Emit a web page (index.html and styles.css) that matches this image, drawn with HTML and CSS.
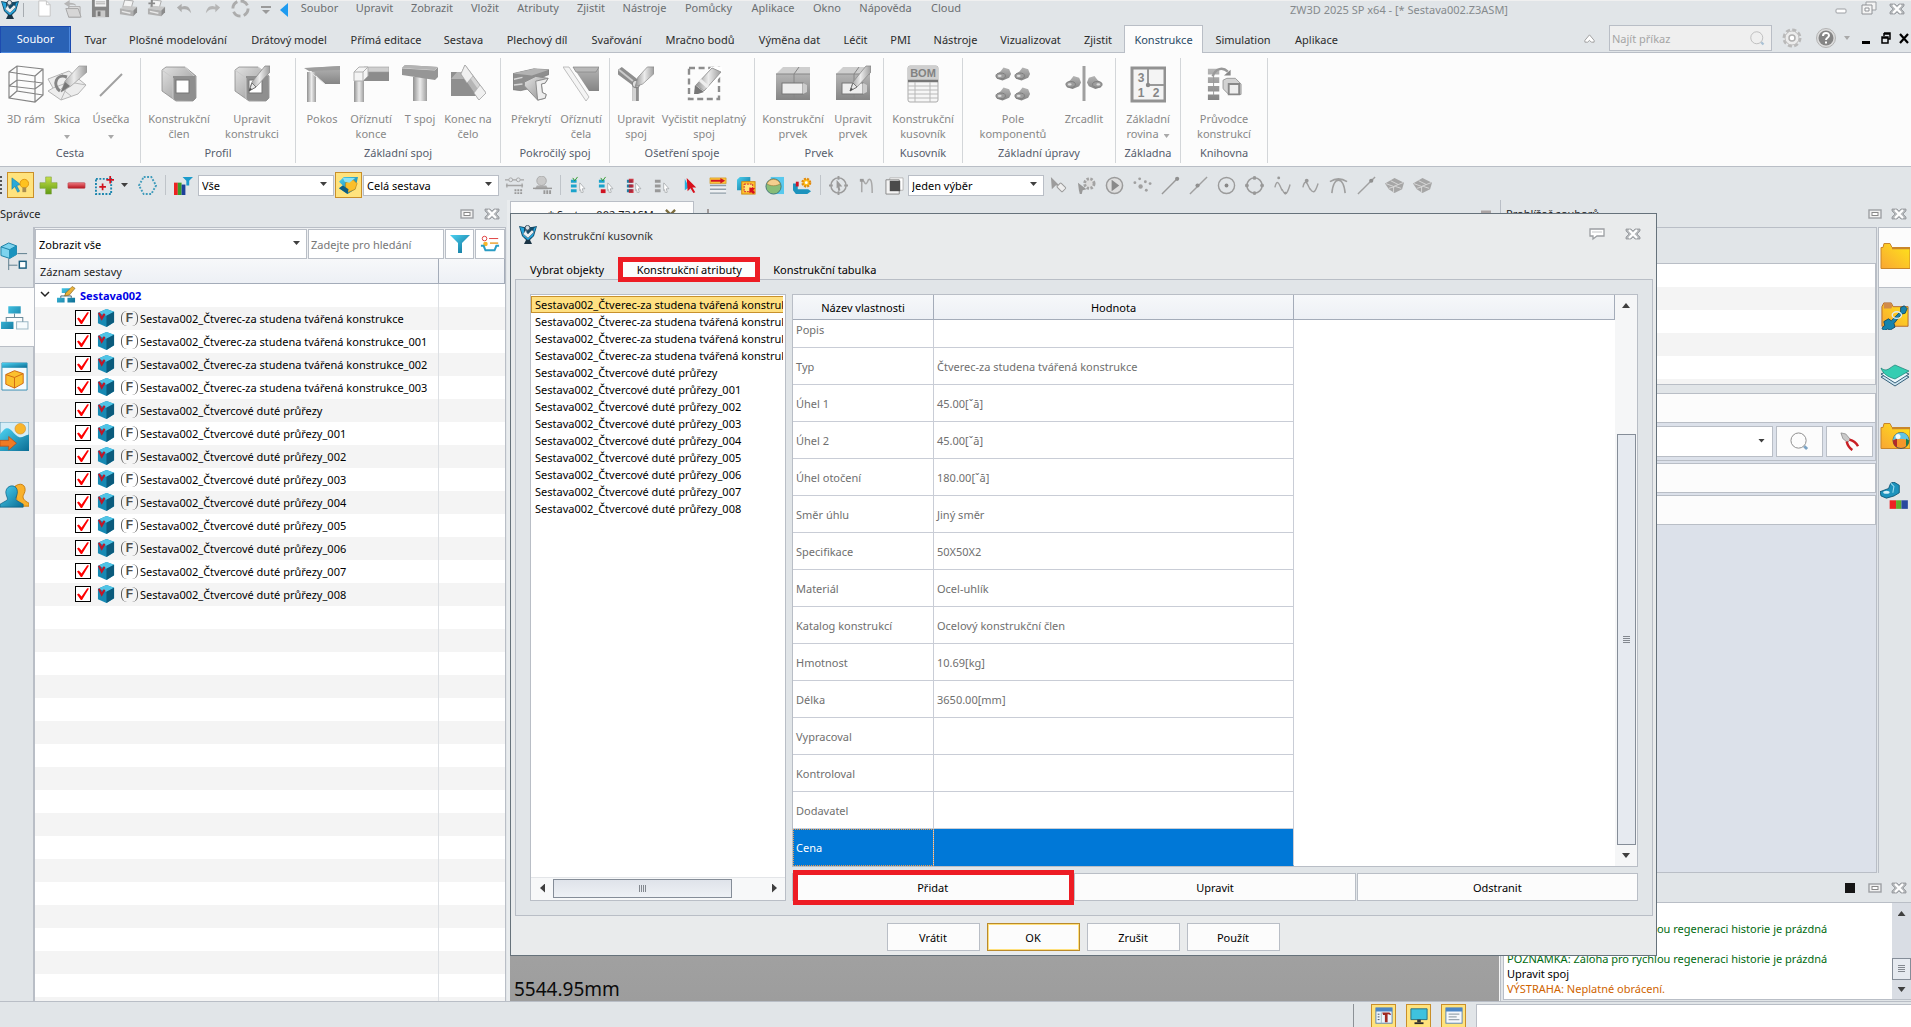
FILE: index.html
```html
<!DOCTYPE html>
<html lang="cs">
<head>
<meta charset="utf-8">
<title>ZW3D 2025 SP x64 - [* Sestava002.Z3ASM]</title>
<link rel="stylesheet" href="styles.css">
</head>
<body>
<svg class="sprite" aria-hidden="true">
  <defs>
    <linearGradient id="g1" x1="0" y1="0" x2="1" y2="1"><stop offset="0" stop-color="#e2e2e2"/><stop offset="1" stop-color="#8e8e8e"/></linearGradient>
    <linearGradient id="g2" x1="0" y1="0" x2="0" y2="1"><stop offset="0" stop-color="#b5b5b5"/><stop offset="1" stop-color="#858585"/></linearGradient>
    <linearGradient id="g3" x1="0" y1="0" x2="1" y2="0"><stop offset="0" stop-color="#909090"/><stop offset=".5" stop-color="#ececec"/><stop offset="1" stop-color="#9c9c9c"/></linearGradient>
    <linearGradient id="blu" x1="0" y1="0" x2="1" y2="1"><stop offset="0" stop-color="#4cd2f2"/><stop offset="1" stop-color="#0b6d94"/></linearGradient>
    <linearGradient id="yel" x1="0" y1="1" x2="1" y2="0"><stop offset="0" stop-color="#f9a634"/><stop offset="1" stop-color="#ffe619"/></linearGradient>
    <linearGradient id="grn" x1="0" y1="0" x2="0" y2="1"><stop offset="0" stop-color="#c7e04a"/><stop offset="1" stop-color="#5e9a12"/></linearGradient>
    <linearGradient id="red" x1="0" y1="0" x2="0" y2="1"><stop offset="0" stop-color="#f07a80"/><stop offset="1" stop-color="#b5121c"/></linearGradient>
  </defs>
  <symbol id="logo" viewBox="0 0 18 20"><path d="M0 1l5 1h8l5-1-3 10-4 4H7l-4-4z" fill="#134a68"/><path d="M1 2l4 1v5l4 3 5-4 1-4 2-1-3 9-5 4-5-4z" fill="#26a5dc"/><circle cx="8.500" cy="2.800" r="2.400" fill="#d9dfe3" stroke="#456"/><path d="M7 5l-3 4 5 4 6-6-2-2-4 4-1-1z" fill="#e7eef1" stroke="#567" stroke-width=".6"/><path d="M7 15h4l2 4H5z" fill="#1b3445"/></symbol>
  <symbol id="q-new" viewBox="0 0 20 20"><path d="M4 1h8l4 4v12H4z" fill="#fff" stroke="#c4c4c4"/><path d="M12 1v4h4" fill="none" stroke="#c4c4c4"/></symbol>
  <symbol id="q-open" viewBox="0 0 20 20"><path d="M6 7h12v11H6z" fill="#e2e2e2" stroke="#aaa"/><path d="M3 9h13l3 9H6z" fill="#d6d6d6" stroke="#a6a6a6"/><path d="M1 4l6-4v3c4 0 6 1 7 3-2-1-4-1-7-1v3z" fill="#b5b5b5"/></symbol>
  <symbol id="q-save" viewBox="0 0 20 20"><path d="M1 0h18v18H1z" fill="#858585"/><path d="M4 0h12v7H4z" fill="#f3f3f3"/><path d="M5 2h10M5 4h10" stroke="#aaa"/><path d="M5 11h10v7H5z" fill="#c9c9c9"/><path d="M7 12h3v5H7z" fill="#777"/></symbol>
  <symbol id="q-print" viewBox="0 0 20 20"><path d="M6 0l9 1-2 7-9-1z" fill="#f4f4f4" stroke="#aaa"/><path d="M1 9l5-3 13 1-4 4z" fill="#c8c8c8"/><path d="M1 9l14 2v6L1 15z" fill="#b0b0b0"/><path d="M15 11l4-4v6l-4 4z" fill="#8c8c8c"/><path d="M3 12l9 2" stroke="#e8e8e8" stroke-width="1.5"/></symbol>
  <symbol id="q-plus" viewBox="0 0 20 20"><path d="M5 0v7M1.500 3.500h7" stroke="#8a8a8a" stroke-width="2"/></symbol>
  <symbol id="q-undo" viewBox="0 0 20 20"><path d="M2 8l5-4v3c6-2 9 1 10 7-3-4-5-5-10-4v3z" fill="#adadad"/></symbol>
  <symbol id="q-redo" viewBox="0 0 20 20"><path d="M18 8l-5-4v3C7 5 4 8 3 14c3-4 5-5 10-4v3z" fill="#b5b5b5"/></symbol>
  <symbol id="q-sync" viewBox="0 0 20 20"><circle cx="10" cy="9" r="8" fill="none" stroke="#acacac" stroke-width="3" stroke-dasharray="9 3.5"/></symbol>
  <symbol id="q-more" viewBox="0 0 10 10"><path d="M0 1h10v2H0zM1 5h8L5 9z" fill="#9a9a9a"/></symbol>
  <symbol id="q-tri" viewBox="0 0 8 14"><path d="M8 0v14L0 7z" fill="#1e9bf0"/></symbol>

  <symbol id="w-min" viewBox="0 0 16 16"><rect x="3" y="8" width="10" height="4" rx="1" fill="#fff" stroke="#9c9fa3"/></symbol>
  <symbol id="w-rest" viewBox="0 0 16 16"><path d="M5 1h10v8H5z" fill="#f4f4f4" stroke="#9c9fa3"/><path d="M1 4h10v9H1z" fill="#f4f4f4" stroke="#8f9296"/><path d="M4 7h4v3H4z" fill="#fff" stroke="#8f9296"/></symbol>
  <symbol id="w-close" viewBox="0 0 16 16"><path d="M1 3h5l2 2 2-2h5v2l-3 3 3 3v2h-5l-2-2-2 2H1v-2l3-3-3-3z" fill="#b4b7ba" stroke="#92969a" stroke-width=".8"/><path d="M4 4l8 8M12 4l-8 8" stroke="#fff" stroke-width="2.2"/></symbol>
  <symbol id="w-dock" viewBox="0 0 16 16"><rect x="2" y="4" width="12" height="8" fill="#f0f0f0" stroke="#9da0a4" stroke-width="1.4"/><rect x="5" y="6.500" width="6" height="3" fill="#fff" stroke="#888"/></symbol>
  <symbol id="w-note" viewBox="0 0 16 16"><path d="M1 3h14v7H8l-4 3v-3H1z" fill="#fff" stroke="#9c9fa3" stroke-width="1.3"/><path d="M3 6h10" stroke="#c5c7c9"/></symbol>
  <symbol id="search" viewBox="0 0 20 20"><circle cx="9" cy="9" r="8" fill="none" stroke="#8a8a8a"/><path d="M15 15l3 3" stroke="#7ba3c4" stroke-width="3"/></symbol>
  <symbol id="gear" viewBox="0 0 20 20"><circle cx="10" cy="10" r="8" fill="#eee" stroke="#b9b9b9" stroke-width="3" stroke-dasharray="4 2.280"/><circle cx="10" cy="10" r="7" fill="#ececec" stroke="#bdbdbd"/><circle cx="10" cy="10" r="3" fill="#fff" stroke="#b0b0b0" stroke-width="1.500"/></symbol>
  <symbol id="help" viewBox="0 0 20 20"><circle cx="10" cy="10" r="9.500" fill="#dcdcdc" stroke="#b3b3b3"/><circle cx="10" cy="10" r="7.500" fill="#858585"/><path d="M7 8c0-4 6-4 6-.5 0 2.300-3 2.300-3 4.500m0 1.500v2" fill="none" stroke="#fff" stroke-width="2"/></symbol>

  <symbol id="r-frame" viewBox="0 0 36 38"><path d="M1 7L9 1l26 3v26l-8 7-26-4zM1 7l26 4v26M27 11l8-7M9 1v25l26 4M9 26l-8 7M1 21l26 3 8-6M1 21l8-6 26 3" fill="none" stroke="#858585" stroke-width="1.200"/></symbol>
  <symbol id="r-sketch" viewBox="0 0 40 38"><path d="M1 14l21-8 17 14-8 9-17 6L1 26l5-3z" fill="#ededed" stroke="#b5b5b5"/><path d="M6 23l16-6 17 3M14 35l8-18-8-9M24 31l-10-8" fill="none" stroke="#b9b9b9"/><path d="M20 12C9 8 5 20 13 26" fill="none" stroke="#858585" stroke-width="3"/><path d="M14 27l4-11L32 1h8v6L24 21z" fill="url(#g3)" stroke="#9a9a9a" stroke-width=".7"/><path d="M14 27l4-10 5 4z" fill="#777"/></symbol>
  <symbol id="r-line" viewBox="0 0 36 38"><path d="M7 31L29 9" stroke="#a0a0a0" stroke-width="2"/></symbol>
  <symbol id="r-box" viewBox="0 0 36 38"><path d="M1 5l4-3h19l11 9v22l-3 3H15L1 26z" fill="url(#g1)" stroke="#8a8a8a" stroke-width=".8"/><path d="M12 11h22v24H14l-2-2z" fill="#8f8f8f"/><path d="M1 5l11 8v21M24 2l9 9" fill="none" stroke="#c9c9c9"/><rect x="15" y="15" width="13" height="13" fill="#fff" stroke="#777"/></symbol>
  <symbol id="r-pen" viewBox="0 0 36 38"><path d="M15 26l3-9L31 1l5 0v6L22 22z" fill="url(#g3)" stroke="#8c8c8c" stroke-width=".8"/><path d="M15 26l3-8 4 4z" fill="#e9e9e9" stroke="#555" stroke-width=".7"/><path d="M15 26l1-3 2 1z" fill="#444"/></symbol>
  <symbol id="r-miter" viewBox="0 0 36 38"><path d="M4 3l32-2v18H21z" fill="url(#g2)"/><path d="M3 7h9v30H3z" fill="url(#g3)"/><path d="M0 3l36-2v4L5 6z" fill="#9d9d9d"/><path d="M5 6l16 13" stroke="#e5e5e5"/></symbol>
  <symbol id="r-trim" viewBox="0 0 36 38"><path d="M11 4h25v12H11z" fill="#8c8c8c"/><path d="M11 2h25v5H11z" fill="#cfcfcf" stroke="#9a9a9a" stroke-width=".6"/><path d="M1 14h10v23H1z" fill="url(#g3)"/><path d="M1 7l5-5h9v9l-5 5H1z" fill="#f4f4f4" stroke="#b0b0b0"/><path d="M1 7h9v9M10 7l5-5" fill="none" stroke="#b0b0b0"/></symbol>
  <symbol id="r-tee" viewBox="0 0 36 38"><path d="M11 12h14v24H11z" fill="url(#g3)"/><path d="M0 3l3-3 33 2v10l-3 3L0 10z" fill="#969696"/><path d="M0 3l33 2 3-3" fill="none" stroke="#d9d9d9"/><path d="M0 3l3-3 33 2-3 3z" fill="#b3b3b3"/></symbol>
  <symbol id="r-cap" viewBox="0 0 36 38"><path d="M1 7h15l14 20v4H1z" fill="#8f8f8f"/><path d="M1 14l6-7h9l4 7z" fill="#b4b4b4"/><path d="M15 0l21 28-7 7L11 9z" fill="#c4c4c4" fill-opacity=".7" stroke="#8f8f8f" stroke-width=".8"/><path d="M15 0l8 11-6 7-6-9z" fill="#f0f0f0" stroke="#a5a5a5" stroke-width=".6"/><path d="M30 20l6 8-7 7-5-7z" fill="#f0f0f0" stroke="#a5a5a5" stroke-width=".6"/></symbol>
  <symbol id="r-over" viewBox="0 0 38 38"><path d="M0 8l22-5 16 1v5l-12 5v8l-18 4-8-1z" fill="#8e8e8e" stroke="#777" stroke-width=".7"/><path d="M0 8l22-5 16 1-18 6z" fill="#b3b3b3"/><path d="M1 14l9-2M1 20l9-1" fill="none" stroke="#d8d8d8" stroke-width="1.500"/><path d="M12 17l12-6 13 2-3 5-4 1 1 9 4 2-1 4-8 2-14-15z" fill="url(#g1)" stroke="#8b8b8b"/><path d="M24 16l13-3-3 5-4 1 1 9 4 2-1 4-8 2z" fill="#ededed" stroke="#888"/></symbol>
  <symbol id="r-face" viewBox="0 0 36 38"><path d="M10 2h26v24H26z" fill="url(#g2)"/><path d="M10 2h26l-3 5H13z" fill="#b8b8b8" stroke="#858585" stroke-width=".7"/><path d="M0 2h6l20 30-3 4z" fill="#f4f4f4" stroke="#b0b0b0" stroke-width=".8"/></symbol>
  <symbol id="r-joint" viewBox="0 0 38 38"><path d="M0 4l4-3 18 14v22h-7V20L0 9z" fill="#8e8e8e"/><path d="M15 19h4v18h-4z" fill="#d2d2d2"/><path d="M1 4l15 12" stroke="#ccc" stroke-width="2"/><circle cx="19" cy="19" r="4" fill="#ddd" stroke="#777"/><path d="M18 22l3-10L31 1h7v7L26 19z" fill="url(#g3)" stroke="#8c8c8c" stroke-width=".8"/></symbol>
  <symbol id="r-clean" viewBox="0 0 36 38"><rect x="3" y="3" width="30" height="31" fill="none" stroke="#8d8d8d" stroke-width="2.400" stroke-dasharray="6 3.600"/><path d="M7 24L25 2h11v8L17 30z" fill="#fff"/><path d="M10 20L26 3l9 4-17 19z" fill="url(#g3)" stroke="#999"/><path d="M9 20l9 7-6 2-4 0z" fill="#777"/><path d="M14 15l8 7" stroke="#eee" stroke-width="3"/></symbol>
  <symbol id="r-feat" viewBox="0 0 36 38"><path d="M1 9h34v26H1z" fill="url(#g2)"/><path d="M1 9l7-7h27v7z" fill="#cfcfcf"/><path d="M1 9h34M19 9l5-7M19 9v26" stroke="#868686"/><rect x="7" y="18" width="21" height="11" fill="#eee" stroke="#777"/><path d="M28 18l4 2v7l-4 2z" fill="#ccc"/></symbol>
  <symbol id="r-bom" viewBox="0 0 36 38"><rect x="3" y="1" width="30" height="36" rx="2" fill="#f6f6f6" stroke="#ababab"/><rect x="3" y="1" width="30" height="14" rx="2" fill="#cfcfcf"/><path d="M3 16h30" stroke="#777" stroke-width="2.500"/><path d="M3 21h30M3 25h30M3 29h30M3 33h30M10 17v20M25 17v20" stroke="#b8b8b8"/></symbol>
  <symbol id="lug" viewBox="0 0 18 14"><path d="M1 8l5-4 3-4 6 2 2 5-2 4-7 3-6-2z" fill="url(#g2)"/><ellipse cx="6" cy="9" rx="5" ry="3" fill="#9d9d9d" stroke="#7c7c7c"/><ellipse cx="5" cy="9" rx="2" ry="1.200" fill="#ddd"/></symbol>
  <symbol id="r-array" viewBox="0 0 36 38"><use href="#lug" x="0" y="2" width="17" height="14"/><use href="#lug" x="19" y="2" width="17" height="14"/><use href="#lug" x="0" y="22" width="17" height="14"/><use href="#lug" x="19" y="22" width="17" height="14"/></symbol>
  <symbol id="r-mirror" viewBox="0 0 40 38"><use href="#lug" x="1" y="10" width="17" height="15"/><g transform="matrix(-1 0 0 1 40 0)"><use href="#lug" x="1" y="10" width="17" height="15"/></g><path d="M20 1v35" stroke="#a0a0a0" stroke-width="3"/></symbol>
  <symbol id="r-plane" viewBox="0 0 36 38"><rect x="2" y="3" width="33" height="33" fill="#f4f4f4" stroke="#929292" stroke-width="3"/><path d="M18 4v16h16" fill="none" stroke="#999" stroke-width="2"/><circle cx="18" cy="20" r="2.200" fill="#888"/></symbol>
  <symbol id="r-wiz" viewBox="0 0 38 38"><path d="M2 3h12v6H2zM2 12h12v6H2zM2 21h12v6H2zM2 30h12v6H2z" fill="url(#g2)"/><path d="M8 9v22" stroke="#999"/><path d="M7 11C10 2 18 1 23 6" fill="none" stroke="#999" stroke-width="2.500"/><path d="M26 4v6h-7z" fill="#888"/><path d="M18 15l4-2h9l6 6v11H24l-6-6z" fill="#d2d2d2" stroke="#999"/><path d="M24 19h11v11H24z" fill="#eee" stroke="#888" stroke-width="2"/></symbol>

  <symbol id="t-lamp" viewBox="0 0 20 20"><path d="M1 2l9 7-4 1 3 6-2 1-3-6-3 3z" fill="#2aa9d8" stroke="#0b76a6" stroke-width=".6"/><circle cx="14" cy="8" r="4.500" fill="#ffc21e" stroke="#e2960f"/><path d="M12 12h4v5h-4z" fill="#a98d4f"/></symbol>
  <symbol id="t-plus" viewBox="0 0 20 20"><path d="M7 1h6v6h6v6h-6v6H7v-6H1V7h6z" fill="url(#grn)" stroke="#7a9d3b" stroke-width=".6"/></symbol>
  <symbol id="t-minus" viewBox="0 0 20 20"><rect x="1" y="7" width="18" height="6" rx="1" fill="url(#red)" stroke="#b5444b" stroke-width=".6"/></symbol>
  <symbol id="t-pick" viewBox="0 0 20 20"><rect x="1" y="3" width="16" height="16" fill="none" stroke="#1c86ae" stroke-width="2" stroke-dasharray="2 1.600"/><path d="M8 8v7M4.500 11.500h7M16 0v8M12 4h8" stroke="#d1121e" stroke-width="1.800"/></symbol>
  <symbol id="t-hex" viewBox="0 0 20 20"><path d="M6 1h8l5 9-5 9H6l-5-9z" fill="none" stroke="#3f9bbb" stroke-width="2" stroke-dasharray="2 1.600"/></symbol>
  <symbol id="t-filter" viewBox="0 0 20 20"><path d="M0 7h4v13H0z" fill="#e22"/><path d="M4 7h4v13H4z" fill="#3a9e2a"/><path d="M8 9h4v11H8z" fill="#1c3f9a"/><path d="M9 1h11l-4 4v5h-3V5z" fill="#1b9bcb"/></symbol>
  <symbol id="t-asm" viewBox="0 0 20 20"><path d="M0 6l5-5h15l-3 13-8 5-9-6 4-3z" fill="url(#blu)"/><path d="M7 7l8-3 4 4-2 6-7 3-3-3z" fill="#fbbf2a" stroke="#b97d0a" stroke-width=".6"/><path d="M4 2h13l-6 5-5-1z" fill="#8be3f5"/><path d="M0 13l4-3 6 4-1 5z" fill="#0f5c80"/></symbol>
  <symbol id="t-ref" viewBox="0 0 20 20"><circle cx="6" cy="4" r="2" fill="none" stroke="#a5a5a5"/><circle cx="14" cy="4" r="2" fill="none" stroke="#a5a5a5"/><path d="M0 4h4M8 4h4M16 4h4M1 10h18M2 8v4M18 8v4" stroke="#a5a5a5" stroke-width="1.400"/><path d="M10 15h9M10 18h9" stroke="#999" stroke-dasharray="2 1" stroke-width="2"/></symbol>
  <symbol id="t-ref2" viewBox="0 0 20 20"><circle cx="9" cy="5" r="5" fill="#c9c9c9" stroke="#aaa"/><path d="M4 10h10l2 4H2z" fill="#ababab"/><path d="M0 13h20" stroke="#999" stroke-width="1.500"/><path d="M11 16h9M11 18h9" stroke="#999" stroke-dasharray="2 1" stroke-width="2"/></symbol>
  <symbol id="cur" viewBox="0 0 8 12"><path d="M1 0l6 7-3 0 1 4-2 1-1-4-1 1z" fill="#fff" stroke="#9a9ea2" stroke-width=".8"/></symbol>
  <symbol id="t-l1" viewBox="0 0 20 20"><path d="M2 4h6v3H2zM2 9h6v3H2zM2 14h6v3H2z" fill="#1ba3cb"/><path d="M4 2l2 3 3-4" stroke="#2f9a28" fill="none"/><use href="#cur" x="10" y="7" width="8" height="11"/></symbol>
  <symbol id="t-l2" viewBox="0 0 20 20"><path d="M2 4h6v3H2zM2 9h6v3H2z" fill="#1ba3cb"/><path d="M4 14h5v4H4z" fill="#d01422"/><path d="M4 2l2 3 3-4" stroke="#2f9a28" fill="none"/><use href="#cur" x="10" y="7" width="8" height="11"/></symbol>
  <symbol id="t-l3" viewBox="0 0 20 20"><path d="M2 4h6v3H2zM2 9h6v3H2zM2 14h6v3H2z" fill="#1b7fa5"/><path d="M4 3h5v4H4zM4 9h5v3H4zM4 14h5v4H4z" fill="#d01422" fill-opacity=".8"/><use href="#cur" x="10" y="7" width="8" height="11"/></symbol>
  <symbol id="t-l4" viewBox="0 0 20 20"><path d="M2 4h6v3H2zM2 9h6v3H2zM2 14h6v3H2z" fill="#999"/><use href="#cur" x="10" y="7" width="8" height="11"/></symbol>
  <symbol id="t-arr" viewBox="0 0 20 20"><path d="M4 3v12l4-3 3 5z" fill="#25b1df"/><path d="M6 2l10 10-4 0 3 5-2 1-3-5-3 3z" fill="#d8101c"/></symbol>
  <symbol id="t-rows" viewBox="0 0 20 20"><path d="M1 2h17v6H1z" fill="#fbc43a" stroke="#c98e1a" stroke-width=".6"/><path d="M2 5h11" stroke="#d01422" stroke-width="2"/><path d="M12 2l5 3-5 3z" fill="#d01422"/><path d="M1 9h17v10H1z" fill="#eef1f3"/><path d="M1 10h17M1 14h17M1 18h17" stroke="#8f9da8" stroke-width="1.500"/></symbol>
  <symbol id="t-sel" viewBox="0 0 20 20"><path d="M0 4l3-3h11v14H0z" fill="url(#blu)"/><rect x="5" y="6" width="14" height="13" fill="#ffc52e" stroke="#d08710"/><rect x="7.500" y="8.500" width="9" height="8" fill="#ffe67a" stroke="#c23" stroke-dasharray="2 1"/><path d="M13 12l6 1-2 2 2 2-2 2-2-2-2 1z" fill="#d8101c"/></symbol>
  <symbol id="t-globe" viewBox="0 0 20 20"><path d="M6 1h14v18H6z" fill="#58c9ee"/><circle cx="9" cy="11" r="8" fill="#87bd78" stroke="#477"/><path d="M2 8c3-6 11-6 14 0-3 3-11 3-14 0z" fill="#f3cf8e" stroke="#9b7334" stroke-width=".6"/></symbol>
  <symbol id="t-bowl" viewBox="0 0 20 20"><path d="M0 8h5v6h11l3 2-4 3H3l-3-4z" fill="#1c93bd"/><path d="M3 6h3v5H3z" fill="#d01422"/><circle cx="14" cy="7" r="4" fill="#ffc21e" stroke="#e28a0f" stroke-width="2.500" stroke-dasharray="2 1.200"/><circle cx="14" cy="7" r="1.500" fill="#fff"/></symbol>
  <symbol id="t-circ" viewBox="0 0 20 20"><circle cx="10" cy="10" r="8" fill="none" stroke="#9b9b9b" stroke-width="1.500"/><path d="M10 0v4M10 16v4M0 10h4M16 10h4" stroke="#9b9b9b" stroke-width="2"/><path d="M8 4l6 7-3 0 1 4-2 1-1-4-1 1z" fill="#999"/></symbol>
  <symbol id="t-zig" viewBox="0 0 20 20"><path d="M5 17V4c3-1 3 10 7 0 3-2 4 3 4 14" fill="none" stroke="#a9a9a9" stroke-width="1.600"/><path d="M3 3h4v3H3z" fill="#999"/></symbol>
  <symbol id="t-sq" viewBox="0 0 20 20"><path d="M5 2h14v13H5z" fill="#fff" stroke="#b5b5b5"/><path d="M1 4h14v15H1z" fill="#f4f4f4" stroke="#888"/><path d="M5 5h11v11H5z" fill="#4b4b4b"/></symbol>
  <symbol id="t-c1" viewBox="0 0 20 20"><path d="M2 1l9 9-4 0-4 4z" fill="#9c9c9c"/><rect x="9" y="9" width="8" height="6" rx="1" transform="rotate(45 13 12)" fill="#eee" stroke="#999"/></symbol>
  <symbol id="t-c2" viewBox="0 0 20 20"><circle cx="13" cy="8" r="5" fill="#ddd" stroke="#a3a3a3" stroke-width="3" stroke-dasharray="2.500 1.500"/><path d="M1 7l9 7-4 1-1 4-2 0-1-4z" fill="#999"/></symbol>
  <symbol id="t-play" viewBox="0 0 20 20"><circle cx="10" cy="10" r="8.500" fill="#dedede" stroke="#9b9b9b" stroke-width="1.600"/><path d="M7 4l8 6-8 6z" fill="#8a8a8a"/></symbol>
  <symbol id="t-pts" viewBox="0 0 20 20"><g fill="#a0a0a0"><circle cx="2" cy="7" r="1.500"/><circle cx="7" cy="3" r="1.500"/><circle cx="8" cy="11" r="2.300"/><circle cx="13" cy="6" r="1.500"/><circle cx="18" cy="8" r="1.500"/><circle cx="14" cy="15" r="1.500"/></g></symbol>
  <symbol id="t-seg" viewBox="0 0 20 20"><path d="M1 19L17 3" stroke="#999" stroke-width="1.500"/><circle cx="17" cy="3" r="2.200" fill="#909090"/></symbol>
  <symbol id="t-seg2" viewBox="0 0 20 20"><path d="M1 19L19 1" stroke="#a0a0a0" stroke-width="1.500"/><circle cx="9" cy="10" r="2.200" fill="#909090"/></symbol>
  <symbol id="t-cen" viewBox="0 0 20 20"><circle cx="10" cy="10" r="8.500" fill="none" stroke="#9b9b9b" stroke-width="1.500"/><circle cx="10" cy="10" r="2" fill="#888"/></symbol>
  <symbol id="t-quad" viewBox="0 0 20 20"><circle cx="10" cy="10" r="8" fill="none" stroke="#9b9b9b" stroke-width="1.500"/><g fill="#999"><circle cx="10" cy="2" r="2"/><circle cx="10" cy="18" r="2"/><circle cx="2" cy="10" r="2"/><circle cx="18" cy="10" r="2"/></g></symbol>
  <symbol id="t-wav" viewBox="0 0 20 20"><path d="M2 12c3-14 7 5 8 3 4 8 6 0 8-6" fill="none" stroke="#a0a0a0" stroke-width="1.500"/><circle cx="6" cy="2" r="1.500" fill="#999"/><circle cx="13" cy="18" r="1.500" fill="#999"/></symbol>
  <symbol id="t-wav2" viewBox="0 0 20 20"><path d="M2 12c3-14 7 4 8 2 4 6 6 0 8-6" fill="none" stroke="#a0a0a0" stroke-width="1.500"/><circle cx="6" cy="5" r="2" fill="#999"/></symbol>
  <symbol id="t-arch" viewBox="0 0 20 20"><path d="M1 6c6-4 12-4 18 0M3 18C5 0 15 0 17 18" fill="none" stroke="#9f9f9f" stroke-width="1.700"/></symbol>
  <symbol id="t-seg3" viewBox="0 0 20 20"><path d="M1 19L19 1" stroke="#a0a0a0" stroke-width="1.500"/><circle cx="15" cy="5" r="2.200" fill="#909090"/></symbol>
  <symbol id="t-surf" viewBox="0 0 20 20"><path d="M0 8l5-3 5-3 10 5-2 7-8 4-6-4z" fill="#a6a6a6"/><path d="M1 8l8 3 10-4M4 13l7-2 6 2M6 5l8 4M9 11v6" stroke="#d8d8d8" fill="none"/></symbol>

  <symbol id="s-tree" viewBox="0 0 30 30"><path d="M1 5l8-4 8 3v9l-7 4-9-3z" fill="#7dd3ee" stroke="#1b7fa5"/><path d="M1 5l9 3 7-4M10 8v9" stroke="#1b7fa5" fill="none"/><path d="M10 8l7-4v9l-7 4z" fill="#1a93be"/><path d="M18 12h10M9 17v12M9 24h9" stroke="#5c7c8c" fill="none"/><rect x="20" y="20" width="7" height="7" fill="#fff" stroke="#1b5f7f" stroke-width="1.500"/></symbol>
  <symbol id="s-asm" viewBox="0 0 28 28"><path d="M8 4h12v7H8zM1 19h12v7H1z" fill="url(#blu)"/><path d="M16 19h11v7H16z" fill="#f6fbfd" stroke="#9db9c6"/><path d="M14 11v4M6 19v-4h16v4" fill="none" stroke="#6d8c9b"/></symbol>
  <symbol id="s-cube" viewBox="0 0 28 30"><path d="M1 1h26v28H1z" fill="#f3fbfe" stroke="#3a8fb2"/><path d="M1 1h26v5H1z" fill="url(#blu)"/><path d="M5 13l9-4 9 3v10l-9 5-9-4z" fill="#fbc02d" stroke="#d06a12"/><path d="M5 13l9 3 9-4M14 16v11" fill="none" stroke="#d06a12"/></symbol>
  <symbol id="s-img" viewBox="0 0 30 30"><path d="M0 0h30v30H0z" fill="#d5eef8" stroke="#5d99b4"/><path d="M0 13c6-9 9-8 14-2 8 8 8 4 16 2v17H0z" fill="url(#blu)"/><circle cx="21" cy="7" r="5.500" fill="#f8b62b" stroke="#d1862a" stroke-width=".6"/><path d="M0 19h9v-4l8 7-8 7v-4H0z" fill="#f07a24" stroke="#b8470f" stroke-width=".7"/></symbol>
  <symbol id="s-user" viewBox="0 0 30 26"><path d="M16 2c8-5 12 2 9 8-3 5 0 7 5 10v3H18z" fill="#f9b12c" stroke="#c97f12"/><path d="M6 8c1-8 12-8 12 0 0 5-3 7-1 9l7 4v3H0v-3l7-4c2-2-1-4-1-9z" fill="url(#blu)" stroke="#0d5c80" stroke-width=".7"/></symbol>
  <symbol id="funnel" viewBox="0 0 20 20"><path d="M0 1h20l-8 8v10H8V9z" fill="url(#blu)"/></symbol>
  <symbol id="basket" viewBox="0 0 22 20"><circle cx="5" cy="4" r="2.500" fill="none" stroke="#d33"/><path d="M10 4h10" stroke="#d33"/><circle cx="6" cy="10" r="2.500" fill="#f8b62b"/><path d="M11 9h9" stroke="#e99b23" stroke-width="1.500"/><path d="M1 12h3l2 5h10l2-5h3" fill="none" stroke="#2a9cc4" stroke-width="2.200"/></symbol>
  <symbol id="root" viewBox="0 0 20 18"><path d="M5 2h9v5H5zM0 12h8v5H0zM11 12h8v5h-8z" fill="url(#blu)"/><path d="M9 7v3M4 12v-2h11v2" fill="none" stroke="#47606e"/><path d="M9 7L16 0l3 2-6 7-5 1z" fill="#e9b13a" stroke="#7b5a16" stroke-width=".6"/></symbol>
  <symbol id="part" viewBox="0 0 19 19"><path d="M1 4l9-4 8 3v11l-8 5-9-4z" fill="#1689b3"/><path d="M1 4l9-4 8 3-8 4z" fill="#4fc4e6"/><path d="M10 7l8-4v11l-8 5z" fill="#0b5b7c"/><path d="M2 4l3 6 3-5" fill="none" stroke="#c01828" stroke-width="2.200"/></symbol>

  <symbol id="f-dir" viewBox="0 0 30 27"><path d="M1 5h2l1-4h6l2 4h18v21H1z" fill="url(#yel)" stroke="#c9862b"/><path d="M12 6h18" stroke="#c9862b" stroke-width="1.500"/></symbol>
  <symbol id="f-bolt" viewBox="0 0 30 30"><path d="M1 5l2-4h8l2 4h16v21H1z" fill="url(#yel)" stroke="#b3662a"/><path d="M3 1h8l1 4-1 2H3z" fill="#d08a4a"/><path d="M1 28l3-3-1-4 5-3 3 2 10-10v-4l4-2 3 3-2 5-4 1-8 10 1 4-5 3-3-1-4 2z" fill="#1783ad" stroke="#0b3a55" stroke-width=".8"/><ellipse cx="17" cy="14" rx="5" ry="3.500" fill="none" stroke="#dceaf0" stroke-width="1.500"/></symbol>
  <symbol id="f-lay" viewBox="0 0 30 22"><path d="M1 12l14-7 14 7-14 9z" fill="#cfe6f2" stroke="#37617a"/><path d="M1 9l14-6 14 6-14 9z" fill="#eef8fc" stroke="#37617a"/><path d="M1 3c6 5 9-1 14-3l14 6-14 8C8 12 3 9 1 3z" fill="#35cdb2" stroke="#1a7f74" stroke-width=".7"/></symbol>
  <symbol id="f-ball" viewBox="0 0 30 27"><path d="M1 5h2l1-4h6l2 4h18v21H1z" fill="url(#yel)" stroke="#c9862b"/><path d="M12 6h18" stroke="#c9862b" stroke-width="1.500"/><circle cx="21" cy="18" r="8" fill="#f5962a" stroke="#555"/><path d="M13 18a8 8 0 0 1 16 0c-4-2-12-2-16 0z" fill="#5fc5e5"/><path d="M13 18c1-1 3-1 4-2v9a8 8 0 0 1-4-7z" fill="#b12a2a"/><path d="M26 16l3 2a8 8 0 0 1-3 6z" fill="#1a7f4a"/><circle cx="18" cy="14" r="2.500" fill="#f4fbff"/></symbol>
  <symbol id="f-cap" viewBox="0 0 28 26"><path d="M0 9l8-3 2-5 3-1 5 3v7l-5 3-7 2-5-2z" fill="#1d93bd" stroke="#0b5373" stroke-width=".8"/><path d="M10 1l3 3-1 6" fill="none" stroke="#9adcf0"/><ellipse cx="6" cy="9.500" rx="3" ry="1.500" fill="#d6f0f8"/><path d="M9 17h6v8H9z" fill="#e22"/><path d="M15 17h5v8h-5z" fill="#5fae2c"/><path d="M20 17h6v8h-6z" fill="#2a4a9e"/></symbol>
  <symbol id="plier" viewBox="0 0 20 20"><path d="M1 1l5 1 5 6-3 3-5-4z" fill="#c9c9c9" stroke="#888" stroke-width=".8"/><path d="M7 10c1 4 3 7 6 9M10 8c4 1 7 3 9 7" fill="none" stroke="#c91f24" stroke-width="2.600"/></symbol>

  <symbol id="b-tool" viewBox="0 0 20 20"><rect x="1" y="1" width="18" height="17" fill="#eef5fb" stroke="#4f7fb5"/><path d="M1 1h18v4H1z" fill="#4c86c6"/><path d="M3 8h2M3 11h2M3 14h2" stroke="#345"/><path d="M7 6v12" stroke="#9bb"/><path d="M8 6h8l2 2-1 1-2-1h-1v9h-3V9H9z" fill="#a02a20"/></symbol>
  <symbol id="b-mon" viewBox="0 0 20 20"><path d="M1 2h18v12H1z" fill="#3ec2de" stroke="#256b80"/><path d="M8 14h4v3H8z" fill="#333"/><path d="M5 17h10v2H5z" fill="#2a2a2a"/></symbol>
  <symbol id="b-list" viewBox="0 0 20 20"><rect x="1" y="1" width="18" height="17" fill="#f6f8fb" stroke="#4f7fb5"/><path d="M1 1h18v4H1z" fill="#4c86c6"/><path d="M4 8h12M4 11h9M4 14h12" stroke="#9aa5af" stroke-width="1.300"/></symbol>
</svg>

<header class="titlebar">
  <div class="quick">
    <svg class="logo"><use href="#logo"/></svg><i class="vsep"></i>
    <button class="qb" aria-label="Nový"><svg><use href="#q-new"/></svg></button>
    <button class="qb" aria-label="Otevřít"><svg><use href="#q-open"/></svg></button>
    <button class="qb" aria-label="Uložit"><svg><use href="#q-save"/></svg></button>
    <button class="qb" aria-label="Tisk"><svg><use href="#q-print"/></svg></button>
    <button class="qb" aria-label="Dávkový tisk"><svg><use href="#q-print"/><use href="#q-plus"/></svg></button>
    <button class="qb" aria-label="Zpět"><svg><use href="#q-undo"/></svg></button>
    <button class="qb" aria-label="Znovu"><svg><use href="#q-redo"/></svg></button>
    <button class="qb" aria-label="Regenerovat"><svg><use href="#q-sync"/></svg></button>
    <button class="qb small" aria-label="Více"><svg><use href="#q-more"/></svg></button>
    <button class="qb tri" aria-label="Sbalit nabídku"><svg><use href="#q-tri"/></svg></button>
  </div>
  <nav class="menu">
    <a href="#">Soubor</a><a href="#">Upravit</a><a href="#">Zobrazit</a><a href="#">Vložit</a><a href="#">Atributy</a><a href="#">Zjistit</a><a href="#">Nástroje</a><a href="#">Pomůcky</a><a href="#">Aplikace</a><a href="#">Okno</a><a href="#">Nápověda</a><a href="#">Cloud</a>
  </nav>
  <div class="app-title">ZW3D 2025 SP x64 - [* Sestava002.Z3ASM]</div>
  <div class="winbtns">
    <button aria-label="Minimalizovat"><svg><use href="#w-min"/></svg></button><button aria-label="Obnovit"><svg><use href="#w-rest"/></svg></button><button aria-label="Zavřít"><svg><use href="#w-close"/></svg></button>
  </div>
</header>

<div class="tabrow">
  <nav class="tabs">
    <a href="#" class="file">Soubor</a><a href="#">Tvar</a><a href="#">Plošné modelování</a><a href="#">Drátový model</a><a href="#">Přímá editace</a><a href="#">Sestava</a><a href="#">Plechový díl</a><a href="#">Svařování</a><a href="#">Mračno bodů</a><a href="#">Výměna dat</a><a href="#">Léčit</a><a href="#">PMI</a><a href="#">Nástroje</a><a href="#">Vizualizovat</a><a href="#">Zjistit</a><a href="#" class="on">Konstrukce</a><a href="#">Simulation</a><a href="#">Aplikace</a>
  </nav>
  <div class="tabtools">
    <button class="tt" aria-label="Sbalit pás"><svg viewBox="0 0 12 12"><path d="M1 8l5-6 5 6v2H8L6 8l-2 2H1z" fill="#fff" stroke="#999"/></svg></button>
    <label class="find"><input type="text" placeholder="Najít příkaz" aria-label="Najít příkaz"><svg><use href="#search"/></svg></label>
    <button class="tg" aria-label="Nastavení"><svg><use href="#gear"/></svg></button>
    <button class="th" aria-label="Nápověda"><svg><use href="#help"/></svg></button><i class="tri-dn pale"></i>
    <button class="mdi" aria-label="Minimalizovat okno"><svg viewBox="0 0 10 12"><path d="M1 9h8v3H1z"/></svg></button>
    <button class="mdi" aria-label="Obnovit okno"><svg viewBox="0 0 10 12"><path d="M3 1h6v6H7M3 1v3M3 2h6M1 5h6v6H1zM1 6h6" fill="none" stroke="#000" stroke-width="1.500"/></svg></button>
    <button class="mdi end" aria-label="Zavřít okno"><svg viewBox="0 0 10 12"><path d="M1 2l8 9M9 2l-8 9" stroke="#000" stroke-width="2.200"/></svg></button>
  </div>
</div>

<section class="ribbon">
  <div class="grp c1"><div class="items">
    <button><svg><use href="#r-frame"/></svg>3D rám</button><button><svg class="w40"><use href="#r-sketch"/></svg>Skica<i class="tri-dn pale"></i></button><button><svg><use href="#r-line"/></svg>Úsečka<i class="tri-dn pale"></i></button></div><h2>Cesta</h2></div>
  <div class="grp c2"><div class="items">
    <button><svg><use href="#r-box"/></svg>Konstrukční<br>člen</button><button><svg><use href="#r-box"/><use href="#r-pen"/></svg>Upravit<br>konstrukci</button></div><h2>Profil</h2></div>
  <div class="grp c3"><div class="items">
    <button><svg><use href="#r-miter"/></svg>Pokos</button><button><svg><use href="#r-trim"/></svg>Oříznutí<br>konce</button><button><svg><use href="#r-tee"/></svg>T spoj</button><button><svg><use href="#r-cap"/></svg>Konec na<br>čelo</button></div><h2>Základní spoj</h2></div>
  <div class="grp c4"><div class="items">
    <button><svg><use href="#r-over"/></svg>Překrytí</button><button><svg><use href="#r-face"/></svg>Oříznutí<br>čela</button></div><h2>Pokročilý spoj</h2></div>
  <div class="grp c5"><div class="items">
    <button><svg><use href="#r-joint"/></svg>Upravit<br>spoj</button><button><svg><use href="#r-clean"/></svg>Vyčistit neplatný<br>spoj</button></div><h2>Ošetření spoje</h2></div>
  <div class="grp c6"><div class="items">
    <button><svg><use href="#r-feat"/></svg>Konstrukční<br>prvek</button><button><svg><use href="#r-feat"/><use href="#r-pen"/></svg>Upravit<br>prvek</button></div><h2>Prvek</h2></div>
  <div class="grp c7"><div class="items">
    <button><svg><use href="#r-bom"/><text x="18" y="12" class="t-bom">BOM</text></svg>Konstrukční<br>kusovník</button></div><h2>Kusovník</h2></div>
  <div class="grp c8"><div class="items">
    <button><svg><use href="#r-array"/></svg>Pole<br>komponentů</button><button><svg class="w40"><use href="#r-mirror"/></svg>Zrcadlit</button></div><h2>Základní úpravy</h2></div>
  <div class="grp c9"><div class="items">
    <button><svg><use href="#r-plane"/><text x="11" y="17" class="t-num">3</text><text x="11" y="32" class="t-num">1</text><text x="26" y="32" class="t-num">2</text></svg>Základní<br><span class="inl">rovina<i class="tri-dn pale"></i></span></button></div><h2>Základna</h2></div>
  <div class="grp c10"><div class="items">
    <button><svg><use href="#r-wiz"/></svg>Průvodce<br>konstrukcí</button></div><h2>Knihovna</h2></div>
</section>

<div class="toolbar">
  <i class="grip"></i>
  <button class="tb hot" aria-label="Výběr"><svg><use href="#t-lamp"/></svg></button>
  <button class="tb" aria-label="Přidat do výběru"><svg><use href="#t-plus"/></svg></button>
  <button class="tb" aria-label="Odebrat z výběru"><svg><use href="#t-minus"/></svg></button>
  <button class="tb" aria-label="Výběr oknem"><svg><use href="#t-pick"/></svg></button><i class="tri-dn"></i>
  <button class="tb" aria-label="Výběr polygonem"><svg><use href="#t-hex"/></svg></button><i class="tsep"></i>
  <button class="tb" aria-label="Filtr"><svg><use href="#t-filter"/></svg></button>
  <span class="combo"><select aria-label="Filtr výběru"><option>Vše</option></select></span>
  <button class="tb hot" aria-label="Rozsah"><svg><use href="#t-asm"/></svg></button>
  <span class="combo"><select aria-label="Rozsah výběru"><option>Celá sestava</option></select></span>
  <button class="tb" aria-label="Reference"><svg><use href="#t-ref"/></svg></button><button class="tb" aria-label="Historie referencí"><svg><use href="#t-ref2"/></svg></button><i class="tsep"></i>
  <button class="tb" aria-label="Seznam 1"><svg><use href="#t-l1"/></svg></button><button class="tb" aria-label="Seznam 2"><svg><use href="#t-l2"/></svg></button><button class="tb" aria-label="Seznam 3"><svg><use href="#t-l3"/></svg></button><button class="tb" aria-label="Seznam 4"><svg><use href="#t-l4"/></svg></button><button class="tb" aria-label="Ukazatel"><svg><use href="#t-arr"/></svg></button><button class="tb" aria-label="Řádky"><svg><use href="#t-rows"/></svg></button><button class="tb" aria-label="Oblast"><svg><use href="#t-sel"/></svg></button><button class="tb" aria-label="Zobrazení"><svg><use href="#t-globe"/></svg></button><button class="tb" aria-label="Možnosti výběru"><svg><use href="#t-bowl"/></svg></button><i class="tsep"></i>
  <button class="tb" aria-label="Výběr kruhem"><svg><use href="#t-circ"/></svg></button><button class="tb" aria-label="Řetězec"><svg><use href="#t-zig"/></svg></button><button class="tb" aria-label="Plochy"><svg><use href="#t-sq"/></svg></button>
  <span class="combo flush"><select aria-label="Režim výběru"><option>Jeden výběr</option></select></span>
  <button class="tb" aria-label="Smazat výběr"><svg><use href="#t-c1"/></svg></button><button class="tb" aria-label="Nastavení výběru"><svg><use href="#t-c2"/></svg></button><button class="tb" aria-label="Spustit"><svg><use href="#t-play"/></svg></button><button class="tb" aria-label="Body"><svg><use href="#t-pts"/></svg></button><button class="tb" aria-label="Koncový bod"><svg><use href="#t-seg"/></svg></button><button class="tb" aria-label="Střed úsečky"><svg><use href="#t-seg2"/></svg></button><button class="tb" aria-label="Střed"><svg><use href="#t-cen"/></svg></button><button class="tb" aria-label="Kvadrant"><svg><use href="#t-quad"/></svg></button><button class="tb" aria-label="Řídicí bod"><svg><use href="#t-wav"/></svg></button><button class="tb" aria-label="Bod křivky"><svg><use href="#t-wav2"/></svg></button><button class="tb" aria-label="Tečna"><svg><use href="#t-arch"/></svg></button><button class="tb" aria-label="Bod na úsečce"><svg><use href="#t-seg3"/></svg></button><button class="tb" aria-label="Plocha"><svg><use href="#t-surf"/></svg></button><button class="tb" aria-label="Bod na ploše"><svg><use href="#t-surf"/></svg></button>
</div>

<main class="work">
  <section class="manager">
    <div class="phead"><span>Správce</span><button aria-label="Ukotvit"><svg><use href="#w-dock"/></svg></button><button aria-label="Zavřít panel"><svg><use href="#w-close"/></svg></button></div>
    <div class="pbody">
      <nav class="side left">
        <button aria-label="Historie"><svg><use href="#s-tree"/></svg></button><button class="on" aria-label="Sestava"><svg><use href="#s-asm"/></svg></button><button aria-label="Pohledy"><svg><use href="#s-cube"/></svg></button><button aria-label="Vizuální správce"><svg><use href="#s-img"/></svg></button><button aria-label="Role"><svg><use href="#s-user"/></svg></button>
      </nav>
      <div class="tree">
        <div class="filters">
          <span class="combo"><select aria-label="Zobrazit"><option>Zobrazit vše</option></select></span>
          <input type="text" placeholder="Zadejte pro hledání" aria-label="Hledat">
          <button aria-label="Filtrovat"><svg><use href="#funnel"/></svg></button><button aria-label="Stavy"><svg><use href="#basket"/></svg></button>
        </div>
        <div class="thead"><span>Záznam sestavy</span><i></i></div>
        <ul class="rows">
          <li class="rootrow"><svg class="chev" viewBox="0 0 10 8"><path d="M1 1l4 4 4-4" fill="none" stroke="#222" stroke-width="1.500"/></svg><svg class="rt"><use href="#root"/></svg><b>Sestava002</b></li>
          <li><label><input type="checkbox" checked><svg class="pt"><use href="#part"/></svg><b class="fx">F</b>Sestava002_Čtverec-za studena tvářená konstrukce</label></li>
          <li><label><input type="checkbox" checked><svg class="pt"><use href="#part"/></svg><b class="fx">F</b>Sestava002_Čtverec-za studena tvářená konstrukce_001</label></li>
          <li><label><input type="checkbox" checked><svg class="pt"><use href="#part"/></svg><b class="fx">F</b>Sestava002_Čtverec-za studena tvářená konstrukce_002</label></li>
          <li><label><input type="checkbox" checked><svg class="pt"><use href="#part"/></svg><b class="fx">F</b>Sestava002_Čtverec-za studena tvářená konstrukce_003</label></li>
          <li><label><input type="checkbox" checked><svg class="pt"><use href="#part"/></svg><b class="fx">F</b>Sestava002_Čtvercové duté průřezy</label></li>
          <li><label><input type="checkbox" checked><svg class="pt"><use href="#part"/></svg><b class="fx">F</b>Sestava002_Čtvercové duté průřezy_001</label></li>
          <li><label><input type="checkbox" checked><svg class="pt"><use href="#part"/></svg><b class="fx">F</b>Sestava002_Čtvercové duté průřezy_002</label></li>
          <li><label><input type="checkbox" checked><svg class="pt"><use href="#part"/></svg><b class="fx">F</b>Sestava002_Čtvercové duté průřezy_003</label></li>
          <li><label><input type="checkbox" checked><svg class="pt"><use href="#part"/></svg><b class="fx">F</b>Sestava002_Čtvercové duté průřezy_004</label></li>
          <li><label><input type="checkbox" checked><svg class="pt"><use href="#part"/></svg><b class="fx">F</b>Sestava002_Čtvercové duté průřezy_005</label></li>
          <li><label><input type="checkbox" checked><svg class="pt"><use href="#part"/></svg><b class="fx">F</b>Sestava002_Čtvercové duté průřezy_006</label></li>
          <li><label><input type="checkbox" checked><svg class="pt"><use href="#part"/></svg><b class="fx">F</b>Sestava002_Čtvercové duté průřezy_007</label></li>
          <li><label><input type="checkbox" checked><svg class="pt"><use href="#part"/></svg><b class="fx">F</b>Sestava002_Čtvercové duté průřezy_008</label></li>
        </ul>
      </div>
    </div>
  </section>

  <section class="center">
    <div class="doctabs"><div class="doctab">* Sestava002.Z3ASM<svg viewBox="0 0 12 12"><path d="M1 1l10 10M11 1L1 11" stroke="#7b6c3c" stroke-width="2.500"/></svg></div><svg class="addtab" viewBox="0 0 10 10"><path d="M5 0v10M0 5h10" stroke="#a09a9a" stroke-width="2"/></svg><svg class="mintab" viewBox="0 0 10 4"><path d="M0 2h10" stroke="#aaa3a3" stroke-width="3"/></svg></div>
    <div class="viewport">5544.95mm</div>
  </section>

  <section class="right">
    <div class="phead"><span>Prohlížeč souborů</span><button aria-label="Ukotvit"><svg><use href="#w-dock"/></svg></button><button aria-label="Zavřít panel"><svg><use href="#w-close"/></svg></button></div>
    <div class="rbody">
      <div class="files">
        <div class="filelist"></div>
        <div class="fbox"></div>
        <div class="fbar"><span class="combo"><select aria-label="Soubor"><option></option></select></span><button aria-label="Hledat soubor"><svg><use href="#search"/></svg></button><button aria-label="Nástroje"><svg><use href="#plier"/></svg></button></div>
        <div class="fbox b2"></div>
        <div class="fbox b3"></div>
      </div>
      <nav class="side rgt">
        <button class="on" aria-label="Soubory"><svg><use href="#f-dir"/></svg></button><button aria-label="Knihovna dílů"><svg><use href="#f-bolt"/></svg></button><button aria-label="Hladiny"><svg><use href="#f-lay"/></svg></button><button aria-label="Materiály"><svg><use href="#f-ball"/></svg></button><button aria-label="Vzhled"><svg><use href="#f-cap"/></svg></button>
      </nav>
    </div>
    <div class="phead out"><i class="stop"></i><button aria-label="Ukotvit výstup"><svg><use href="#w-dock"/></svg></button><button aria-label="Zavřít výstup"><svg><use href="#w-close"/></svg></button></div>
    <div class="output">
      <div class="log"><p class="note">POZNÁMKA: Záloha pro rychlou regeneraci historie je prázdná</p><p>&nbsp;</p><p class="note">POZNÁMKA: Záloha pro rychlou regeneraci historie je prázdná</p><p>Upravit spoj</p><p class="warn">VÝSTRAHA: Neplatné obrácení.</p></div>
      <div class="vbar"><i class="tri-up"></i><i class="thumb lines"></i><i class="tri-dn"></i></div>
    </div>
  </section>

  <section class="dialog" role="dialog" aria-label="Konstrukční kusovník">
    <header><svg class="logo"><use href="#logo"/></svg><h1>Konstrukční kusovník</h1><button aria-label="Komentář"><svg><use href="#w-note"/></svg></button><button aria-label="Zavřít dialog"><svg><use href="#w-close"/></svg></button></header>
    <div class="dtabs"><button>Vybrat objekty</button><button class="on">Konstrukční atributy</button><button>Konstrukční tabulka</button></div>
    <div class="dpanel">
      <div class="parts">
        <ul>
          <li class="sel">Sestava002_Čtverec-za studena tvářená konstrukce</li><li>Sestava002_Čtverec-za studena tvářená konstrukce_001</li><li>Sestava002_Čtverec-za studena tvářená konstrukce_002</li><li>Sestava002_Čtverec-za studena tvářená konstrukce_003</li><li>Sestava002_Čtvercové duté průřezy</li><li>Sestava002_Čtvercové duté průřezy_001</li><li>Sestava002_Čtvercové duté průřezy_002</li><li>Sestava002_Čtvercové duté průřezy_003</li><li>Sestava002_Čtvercové duté průřezy_004</li><li>Sestava002_Čtvercové duté průřezy_005</li><li>Sestava002_Čtvercové duté průřezy_006</li><li>Sestava002_Čtvercové duté průřezy_007</li><li>Sestava002_Čtvercové duté průřezy_008</li>
        </ul>
        <div class="hbar"><i class="tri-lt"></i><i class="thumb lines"></i><i class="tri-rt"></i></div>
      </div>
      <div class="attrs">
        <div class="grid">
          <table>
            <colgroup><col class="k"><col class="v"><col></colgroup>
            <thead><tr><th>Název vlastnosti</th><th>Hodnota</th><th></th></tr></thead>
            <tbody>
              <tr class="cut"><td>Popis</td><td></td><td></td></tr>
              <tr><td>Typ</td><td>Čtverec-za studena tvářená konstrukce</td><td></td></tr>
              <tr><td>Úhel 1</td><td>45.00[ˇă]</td><td></td></tr>
              <tr><td>Úhel 2</td><td>45.00[ˇă]</td><td></td></tr>
              <tr><td>Úhel otočení</td><td>180.00[ˇă]</td><td></td></tr>
              <tr><td>Směr úhlu</td><td>Jiný směr</td><td></td></tr>
              <tr><td>Specifikace</td><td>50X50X2</td><td></td></tr>
              <tr><td>Materiál</td><td>Ocel-uhlík</td><td></td></tr>
              <tr><td>Katalog konstrukcí</td><td>Ocelový konstrukční člen</td><td></td></tr>
              <tr><td>Hmotnost</td><td>10.69[kg]</td><td></td></tr>
              <tr><td>Délka</td><td>3650.00[mm]</td><td></td></tr>
              <tr><td>Vypracoval</td><td></td><td></td></tr>
              <tr><td>Kontroloval</td><td></td><td></td></tr>
              <tr><td>Dodavatel</td><td></td><td></td></tr>
              <tr class="sel"><td>Cena</td><td></td><td></td></tr>
            </tbody>
          </table>
          <div class="vbar"><i class="tri-up"></i><i class="thumb lines"></i><i class="tri-dn"></i></div>
        </div>
        <div class="acts"><button class="marked">Přidat</button><button>Upravit</button><button>Odstranit</button></div>
      </div>
    </div>
    <footer><button>Vrátit</button><button class="def">OK</button><button>Zrušit</button><button>Použít</button></footer>
  </section>
</main>

<footer class="status"><i class="ssep"></i><button aria-label="Nástroje"><svg><use href="#b-tool"/></svg></button><button aria-label="Obrazovka"><svg><use href="#b-mon"/></svg></button><button aria-label="Výpis"><svg><use href="#b-list"/></svg></button><input type="text" aria-label="Příkaz"></footer>
</body>
</html>
```
FILE: styles.css
```css
:root {
  --bg: #e1e5e8;
  --line: #b9bec6;
  --text: #1e1e1e;
}
* { box-sizing: border-box; margin: 0; padding: 0; }
html, body { height: 100%; }
body {
  display: flex;
  flex-direction: column;
  min-height: 100vh;
  overflow: hidden;
  background: var(--bg);
  color: var(--text);
  font: 11px/15px "Noto Sans", "Open Sans", sans-serif;
}
button, input, select { font: inherit; color: inherit; background: none; border: 0; border-radius: 0; }
button { display: flex; align-items: center; justify-content: center; }
a { color: inherit; text-decoration: none; }
ul { list-style: none; }
h1, h2 { font: inherit; }
svg { display: block; flex: none; width: 16px; height: 16px; overflow: visible; }
.sprite { position: absolute; width: 0; height: 0; }
.t-bom { font: bold 11px "Liberation Sans", sans-serif; text-anchor: middle; fill: #828282; }
.t-num { font: bold 12px "Liberation Sans", sans-serif; text-anchor: middle; fill: #868686; }

.tri-dn, .tri-up, .tri-lt, .tri-rt { flex: none; width: 8px; height: 5px; background: #3f3f3f; }
.tri-dn { clip-path: polygon(0 0, 100% 0, 50% 100%); }
.tri-up { clip-path: polygon(0 100%, 100% 100%, 50% 0); }
.tri-lt, .tri-rt { width: 5px; height: 9px; }
.tri-lt { clip-path: polygon(100% 0, 100% 100%, 0 50%); }
.tri-rt { clip-path: polygon(0 0, 0 100%, 100% 50%); }
.tri-dn.pale { width: 6px; height: 4px; background: #a9a9a9; }

.combo { position: relative; display: flex; background: #fff; border: 1px solid var(--line); }
.combo select { flex: 1; min-width: 0; appearance: none; padding-left: 3px; color: #000; }
.combo::after {
  content: ""; position: absolute; right: 6px; top: 50%; margin-top: -3px;
  width: 7px; height: 4px; background: #3f3f3f; clip-path: polygon(0 0, 100% 0, 50% 100%);
}

/* title bar */
.titlebar { flex: none; display: flex; height: 25px; border-top: 1px solid #f0f0f0; color: #6b6e70; }
.quick { display: flex; width: 292px; height: 17px; align-items: center; }
.quick .logo { width: 18px; height: 20px; margin-left: 1px; }
.vsep { width: 1px; height: 14px; margin: 0 6px 0 4px; background: #a7acb1; }
.qb { width: 28px; height: 18px; }
.qb svg { width: 19px; height: 19px; }
.qb.small { width: 24px; }
.qb.small svg { width: 10px; height: 10px; }
.qb.tri { width: 12px; }
.qb.tri svg { width: 8px; height: 14px; }
.menu { display: grid; grid-template-columns: 55px 55px 60px 46px 60px 46px 61px 67px 62px 46px 71px 50px; text-align: center; line-height: 14px; }
.app-title { flex: 1; text-align: center; color: #858a8d; padding-top: 1px; }
.winbtns { display: flex; height: 16px; }
.winbtns button { width: 28px; }

/* ribbon tabs */
.tabrow { flex: none; display: flex; justify-content: space-between; height: 28px; border-bottom: 1px solid var(--line); }
.tabs { display: grid; grid-template-columns: 74px 43px 122px 100px 94px 61px 86px 73px 94px 85px 47px 43px 67px 83px 52px 79px 80px 67px; text-align: center; line-height: 29px; color: #2b2b2b; }
.tabs .file { margin: 1px 3px 0 0; line-height: 24px; color: #fff; background: #2a62b5; border: 1px solid #1d4bb0; box-shadow: inset -1px -1px #4a86dd; }
.tabs .on { margin-bottom: -1px; background: #fcfcfc; border: 1px solid var(--line); border-bottom: 0; line-height: 27px; color: #2a4a66; }
.tabtools { display: flex; align-items: center; height: 26px; }
.tt { width: 28px; }
.tt svg { width: 11px; height: 11px; }
.find { display: flex; align-items: center; width: 163px; height: 26px; margin-left: 6px; padding: 0 6px 0 2px; background: #efefef; border: 1px solid var(--line); }
.find input { flex: 1; min-width: 0; }
.find input::placeholder { color: #a5a5a5; }
.find svg { width: 15px; height: 15px; opacity: .6; }
.tg { width: 40px; }
.th { width: 28px; }
.tg svg, .th svg { width: 20px; height: 20px; }
.tabtools .tri-dn { margin: 0 6px 0 4px; }
.mdi { width: 20px; }
.mdi.end { width: 15px; }
.mdi svg { width: 10px; height: 12px; }

/* ribbon */
.ribbon { flex: none; display: flex; height: 114px; padding-top: 5px; background: #fcfcfc; border-bottom: 1px solid var(--line); }
.grp { display: flex; flex-direction: column; border-right: 1px solid #d3d6d9; margin-bottom: 3px; }
.items { display: grid; flex: 1; color: #888; }
.items button { flex-direction: column; justify-content: flex-start; padding-top: 7px; white-space: nowrap; line-height: 15px; }
.items svg { width: 36px; height: 38px; margin-bottom: 8px; }
.items svg.w40 { width: 40px; }
.items button > .tri-dn { margin-top: 9px; }
.inl { display: inline-flex; align-items: center; gap: 5px; }
.inl .tri-dn { margin-top: 5px; }
.grp h2 { height: 20px; line-height: 19px; text-align: center; color: #565c6c; }
.c1 { width: 141px; } .c1 .items { padding-left: 5px; grid-template-columns: 42px 40px 48px; }
.c2 { width: 155px; } .c2 .items { padding-left: 5px; grid-template-columns: 66px 80px; }
.c3 { width: 205px; } .c3 .items { padding-left: 2px; grid-template-columns: 48px 50px 48px 48px; }
.c4 { width: 109px; } .c4 .items { padding-left: 5px; grid-template-columns: 50px 50px; }
.c5 { width: 145px; } .c5 .items { padding-left: 4px; grid-template-columns: 44px 92px; }
.c6 { width: 129px; } .c6 .items { padding-left: 2px; grid-template-columns: 72px 48px; }
.c7 { width: 79px; }
.c8 { width: 153px; } .c8 .items { padding-left: 12px; grid-template-columns: 76px 66px; }
.c9 { width: 65px; }
.c10 { width: 87px; }

/* selection toolbar */
.toolbar { flex: none; display: flex; align-items: center; height: 33px; padding-top: 3px; }
.grip { width: 2px; height: 19px; margin-right: 5px; background: repeating-linear-gradient(#555 0 2px, transparent 2px 4px); }
.tb { flex: none; width: 28px; height: 26px; }
.tb svg { width: 19px; height: 19px; }
.tb.hot { width: 27px; background: #ffe37d; border: 1px solid #c98f2a; }
.toolbar > .tri-dn { width: 7px; height: 4px; margin: 0 5px 0 3px; }
.tsep { width: 1px; height: 20px; margin: 0 3px 0 4px; background: #bfc4c9; }
.toolbar .combo { width: 136px; height: 21px; margin: 0 1px; }
.toolbar .combo.flush { margin: 0; }

/* work area */
.work { position: relative; flex: 1; min-height: 0; display: grid; grid-template-columns: 506px 1fr 411px; grid-template-rows: minmax(0, 1fr); border-bottom: 1px solid var(--line); }
.phead { flex: none; display: flex; align-items: center; height: 27px; }
.phead span { flex: 1; }
.phead button { width: 28px; height: 20px; }
.manager, .right, .center { display: flex; flex-direction: column; min-width: 0; min-height: 0; }
.manager .phead button:first-of-type { width: 22px; }
.pbody { flex: 1; display: grid; grid-template-columns: 34px 1fr; grid-template-rows: minmax(0, 1fr); min-height: 0; }
.side { display: flex; flex-direction: column; }
.side button { flex: none; height: 60px; padding-bottom: 2px; }
.side.left { border-right: 1px solid var(--line); }
.side.left svg { width: 29px; height: 29px; }
.side.left button { justify-content: flex-start; }
.side.left .on { background: #fcfcfc; border: 1px solid var(--line); border-width: 1px 0; margin-right: -1px; }
.tree { display: flex; flex-direction: column; min-width: 0; min-height: 0; background: #fff; border: 1px solid var(--line); border-bottom: 0; }
.filters { flex: none; display: grid; grid-template-columns: 272px 1fr 29px 30px; gap: 1px; height: 31px; padding-top: 1px; background: #eef0f2; }
.filters > * { border: 1px solid var(--line); background: #fff; }
.filters .combo::after { right: 6px; }
.filters input { min-width: 0; padding-left: 2px; }
.filters input::placeholder { color: #777; }
.filters svg { width: 20px; height: 20px; }
.thead { flex: none; display: grid; grid-template-columns: 403px 1fr; height: 25px; line-height: 25px; background: linear-gradient(#f7f8fa, #edf0f5); border: 1px solid #a4acb9; border-width: 0 1px 1px 0; }
.thead span { padding-left: 5px; }
.thead i { border-left: 1px solid #a4acb9; }
.rows { flex: 1; min-height: 0; overflow: hidden; background: linear-gradient(90deg, transparent 403px, #dde0e4 403px 404px, transparent 404px), repeating-linear-gradient(#fff 0 23px, #f4f4f4 23px 46px); }
.rows li { height: 23px; display: flex; align-items: center; padding: 0 0 1px 40px; color: #000; white-space: nowrap; }
.rows label { display: flex; align-items: center; }
.rows .rootrow { padding-left: 5px; }
.chev { width: 10px; height: 8px; margin-right: 7px; }
.rt { width: 19px; height: 18px; margin-right: 4px; }
.rootrow b { color: #0000e6; }
.rows input { position: relative; appearance: none; width: 16px; height: 16px; border: 1px solid #000; background: #fff; margin-right: 6px; }
.rows input:checked::after { content: ""; position: absolute; inset: 1px; background: #f00; clip-path: polygon(0 55%, 15% 45%, 38% 70%, 85% 2%, 100% 5%, 42% 100%, 32% 100%); }
.pt { width: 18px; height: 18px; margin-right: 6px; }
.fx { width: 17px; height: 15px; margin-right: 2px; border: 1px solid #5d5d5d; border-width: 0 1px; border-radius: 6px; font: bold 12px/15px "Liberation Sans", sans-serif; text-align: center; color: #4d4d4d; }

.center { border-left: 3px solid #e9ecee; margin-left: 1px; }
.doctabs { flex: none; display: flex; align-items: center; height: 28px; }
.doctab { align-self: stretch; display: flex; align-items: center; gap: 11px; width: 184px; margin-top: 1px; padding-left: 37px; background: #fcfcfc; border: 1px solid var(--line); }
.doctab svg { width: 11px; height: 11px; }
.addtab { width: 10px; height: 10px; margin-left: 9px; }
.mintab { width: 10px; height: 4px; margin: 0 9px 4px auto; }
.viewport { flex: 1; display: flex; align-items: flex-end; padding: 0 4px 1px; background: linear-gradient(#d9d9d9, #9d9d9d); font-size: 19px; line-height: 22px; color: #0b0b0b; border-right: 1px solid #f5f5f5; }

.right { padding-left: 2px; border-left: 1px solid var(--line); }
.right .phead span { padding-left: 3px; }
.right .phead button { width: 22px; }
.right .phead button:last-child { width: 25px; }
.rbody { flex: 1; min-height: 0; display: grid; grid-template-columns: minmax(0, 1fr) 33px; }
.files { display: flex; flex-direction: column; margin-right: 1px; padding: 35px 0 0; border: 1px solid var(--line); border-left: 0; background: linear-gradient(var(--bg) 166px, #dce1ea 166px); }
.filelist { flex: none; height: 122px; margin-bottom: 8px; border: 1px solid var(--line); background: repeating-linear-gradient(#fff 0 23px, #f4f4f4 23px 46px); }
.fbox { flex: none; height: 30px; background: #fcfcfc; border: 1px solid var(--line); }
.fbar { flex: none; display: flex; gap: 3px; height: 38px; padding: 3px 2px; margin-bottom: 2px; border: 1px solid var(--line); border-width: 0 1px 1px 0; background: #dce1ea; }
.fbar .combo { flex: 1; }
.fbar .combo::after { right: 7px; }
.fbar button { width: 47px; background: #fcfcfc; border: 1px solid var(--line); }
.fbar svg { width: 19px; height: 19px; }
.b3 { margin-top: 2px; }
.side.rgt { border-left: 1px solid var(--line); border-top: 1px solid var(--line); }
.side.rgt button { padding-bottom: 4px; }
.side.rgt svg { width: 30px; height: 28px; }
.side.rgt .on { background: #fcfcfc; border-bottom: 1px solid var(--line); }
.phead.out { height: 29px; padding-top: 1px; justify-content: flex-end; }
.stop { width: 10px; height: 10px; margin-right: 9px; background: #161616; }
.output { flex: none; display: grid; grid-template-columns: 1fr 19px; height: 98px; margin-bottom: 1px; background: #fff; border: 1px solid var(--line); border-right: 0; }
.log { display: flex; flex-direction: column; justify-content: flex-end; padding: 0 0 3px 3px; white-space: nowrap; overflow: hidden; color: #000; }
.note { color: #006a10; }
.warn { color: #cf6400; }
.vbar { display: flex; flex-direction: column; align-items: center; justify-content: space-between; padding: 9px 0; background: #f5f6f7; }
.thumb { display: flex; background: #e6eaf0; border: 1px solid #858d98; }
.thumb.lines::after { content: ""; margin: auto; width: 7px; height: 8px; background: repeating-linear-gradient(#83888f 0 1px, transparent 1px 2px); }
.output .vbar { padding: 8px 0 7px; background: #d9dde4; }
.output .thumb { width: 19px; height: 22px; margin-top: 34px; }

/* structural BOM dialog */
.dialog { position: absolute; left: 510px; right: 254px; top: 13px; padding: 0 3px 0 4px; background: #e9ebec; border: 1px solid #66727b; color: #000; }
.dialog > header { display: flex; align-items: center; height: 42px; padding-left: 4px; }
.dialog > header .logo { width: 18px; height: 20px; }
.dialog h1 { flex: 1; padding-left: 6px; color: #333; }
.dialog > header button { width: 36px; padding-bottom: 2px; }
.dialog > header button:last-child { margin-right: 2px; }
.dtabs { display: flex; align-items: flex-end; height: 26px; margin-bottom: -3px; }
.dtabs button { height: 25px; padding: 0 14px 0 15px; }
.dtabs button.on { position: relative; width: 142px; background: #fcfcfc; border: 5px solid #ed1c24; padding: 0; margin-right: -2px; white-space: nowrap; }
.dpanel { display: grid; grid-template-columns: 256px minmax(0, 1fr); gap: 6px; height: 637px; padding: 14px; border: 1px solid var(--line); background: var(--bg); }
.dpanel > * { min-height: 0; }
.parts { display: flex; flex-direction: column; border: 1px solid var(--line); background: #fff; overflow: hidden; }
.parts ul { flex: 1; padding: 1px 1px 0 0; }
.parts li { height: 17px; line-height: 17px; padding-left: 4px; margin-right: 1px; white-space: nowrap; overflow: hidden; }
.parts .sel { line-height: 15px; padding-left: 3px; background: #ffe081; border: 1px solid #c8912c; border-right: 0; }
.hbar { flex: none; display: flex; align-items: center; height: 23px; padding: 0 8px 2px 9px; background: #f7f8f9; border-top: 1px solid #e3e5e8; }
.hbar .thumb { width: 179px; height: 19px; margin: 0 auto 0 8px; background: linear-gradient(#dfe3ea, #eef1f5); }
.hbar .thumb.lines::after { width: 7px; height: 7px; background: repeating-linear-gradient(90deg, #83888f 0 1px, transparent 1px 2px); }
.attrs { display: flex; flex-direction: column; justify-content: space-between; }
.grid { display: grid; grid-template-columns: minmax(0, 1fr) 22px; align-items: stretch; height: 573px; border: 1px solid var(--line); background: #fff; overflow: hidden; }
.grid table { width: 100%; border-collapse: separate; border-spacing: 0; table-layout: fixed; align-self: start; }
.k { width: 141px; }
.v { width: 360px; }
th { height: 25px; font-weight: normal; background: linear-gradient(#f6f8fa, #edf0f5); border-right: 1px solid #a4acb9; border-bottom: 1px solid #a4acb9; }
td { height: 37px; padding-left: 3px; color: #6f6f6f; border-right: 1px solid #c9cdd6; border-bottom: 1px solid #c9cdd6; }
td:last-child { border: 0; }
.cut td { height: 28px; vertical-align: top; line-height: 20px; }
tr.sel td:not(:last-child) { background: #0078d7; color: #fff; border-bottom-color: #0078d7; }
tr.sel td:first-child { outline: 1px dotted #e99a4c; outline-offset: -1px; }
.grid .vbar { padding: 8px 0 8px; }
.grid .thumb { width: 19px; height: 411px; margin-top: 118px; }
.acts { display: grid; grid-template-columns: repeat(3, 1fr); gap: 1px; height: 28px; }
.acts button, .dialog footer button { background: #fcfcfc; border: 1px solid var(--line); }
.acts .marked { position: relative; }
.marked::after { content: ""; position: absolute; inset: -4px -2px -5px 0; border: 5px solid #ed1c24; }
.dialog footer { display: flex; justify-content: center; gap: 7px; padding: 7px 2px 4px 0; }
.dialog footer button { width: 93px; height: 28px; }
.dialog footer .def { border-color: #b98a2c; box-shadow: inset 0 0 0 1px #ffe07c; }

/* status bar */
.status { flex: none; display: grid; grid-template-columns: 1353px 1px 17px 35px 35px 35px 1fr; align-items: end; height: 25px; }
.ssep { grid-column: 2; height: 23px; background: #8c9196; }
.status button { width: 25px; height: 23px; background: #ffe37d; border: 1px solid #c98f2a; border-bottom: 0; }
.status button:first-of-type { grid-column: 4; }
.status button svg { width: 18px; height: 18px; }
.status input { min-width: 0; height: 23px; background: #fff; border: 1px solid var(--line); border-width: 1px 0 0 1px; }
```
